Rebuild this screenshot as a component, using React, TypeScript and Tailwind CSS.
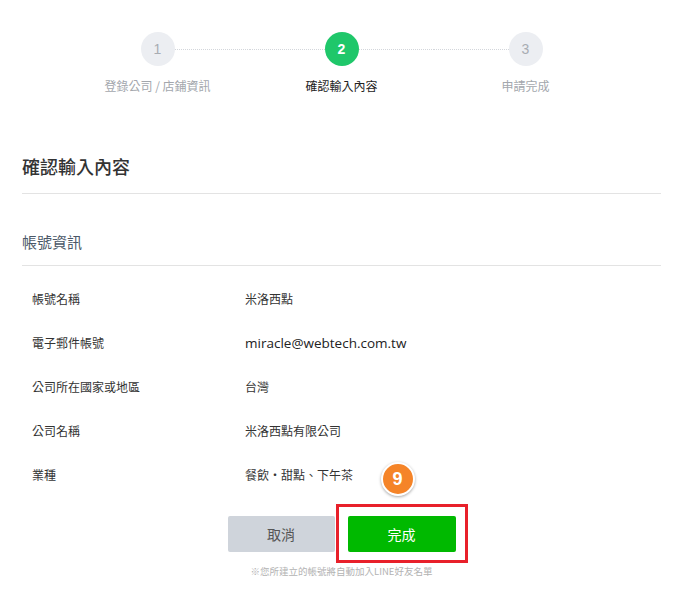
import React from 'react';

const font = { fontFamily: '"Noto Sans CJK TC", "Liberation Sans", sans-serif' };

const steps = [
  { n: 1, label: '登錄公司 / 店鋪資訊' },
  { n: 2, label: '確認輸入內容' },
  { n: 3, label: '申請完成' },
];

const rows = [
  { label: '帳號名稱', value: '米洛西點' },
  { label: '電子郵件帳號', value: 'miracle@webtech.com.tw', latin: true },
  { label: '公司所在國家或地區', value: '台灣' },
  { label: '公司名稱', value: '米洛西點有限公司' },
  { label: '業種', value: '餐飲・甜點、下午茶' },
];

export default function App() {
  return (
    <div className="min-h-[607px] w-full bg-white" style={font}>
      {/* stepper */}
      <div className="flex justify-center pt-[32px]">
        {steps.map((s, i) => (
          <div key={s.n} className="flex w-[184px] flex-col items-center">
            <div className="flex w-full items-center">
              <div className={`flex-1 border-t-[1.5px] border-dotted ${i === 0 ? 'border-transparent' : 'border-[#d3d6db]'}`} />
              <div
                className={`flex h-[34px] w-[34px] items-center justify-center rounded-full text-[14px] ${
                  s.n === 2 ? 'bg-[#1fc76a] font-bold text-white' : 'bg-[#eceef2] text-[#a8acb2]'
                }`}
                style={{ fontFamily: '"Liberation Sans", sans-serif' }}
              >
                {s.n}
              </div>
              <div className={`flex-1 border-t-[1.5px] border-dotted ${i === 2 ? 'border-transparent' : 'border-[#d3d6db]'}`} />
            </div>
            <div className={`mt-[12px] text-[12px] leading-4 ${s.n === 2 ? 'text-[#222]' : 'text-[#a3a7ad]'}`}>
              {s.label}
            </div>
          </div>
        ))}
      </div>

      <div className="px-[22px]">
        <h1 className="mt-[60px] border-b border-[#e3e3e3] pb-[15px] text-[18px] font-medium leading-6 text-[#333]">
          確認輸入內容
        </h1>
        <h2 className="border-b border-[#e3e3e3] pt-[37px] pb-[12px] text-[15px] leading-[22px] text-[#4b5868]">
          帳號資訊
        </h2>

        <div className="pt-[11px]">
          {rows.map((r) => (
            <div key={r.label} className="flex h-[44px] items-center pl-[10px]">
              <div className="w-[213px] text-[12px] text-[#333]">{r.label}</div>
              <div
                className={r.latin ? 'text-[13.5px] text-[#222]' : 'text-[12px] text-[#333]'}
                style={r.latin ? { fontFamily: '"Open Sans", "Liberation Sans", sans-serif' } : undefined}
              >
                {r.value}
              </div>
            </div>
          ))}
        </div>

        <div className="mt-[19px] flex justify-center gap-[13px]">
          <button className="h-[36px] w-[107px] rounded-[2px] bg-[#cfd4db] text-[14px] text-[#555]">取消</button>
          <div className="relative">
            <button className="h-[36px] w-[108px] rounded-[2px] bg-[#00b900] text-[14px] text-white">完成</button>
            <div className="pointer-events-none absolute -top-[12px] -left-[12px] -right-[12px] -bottom-[11px] border-[3px] border-[#e8202a]" />
            <div
              className="absolute -top-[54px] left-[33px] flex h-[34px] w-[34px] items-center justify-center rounded-full border-2 border-white bg-[#f58428] text-[18px] font-bold text-white shadow-[0_1px_3px_rgba(0,0,0,0.35)]"
              style={{ fontFamily: '"Liberation Sans", sans-serif' }}
            >
              9
            </div>
          </div>
        </div>

        <p className="mt-[13px] text-center text-[9.5px] leading-3 text-[#b3b3b3]">
          ※您所建立的帳號將自動加入LINE好友名單
        </p>
      </div>
    </div>
  );
}
